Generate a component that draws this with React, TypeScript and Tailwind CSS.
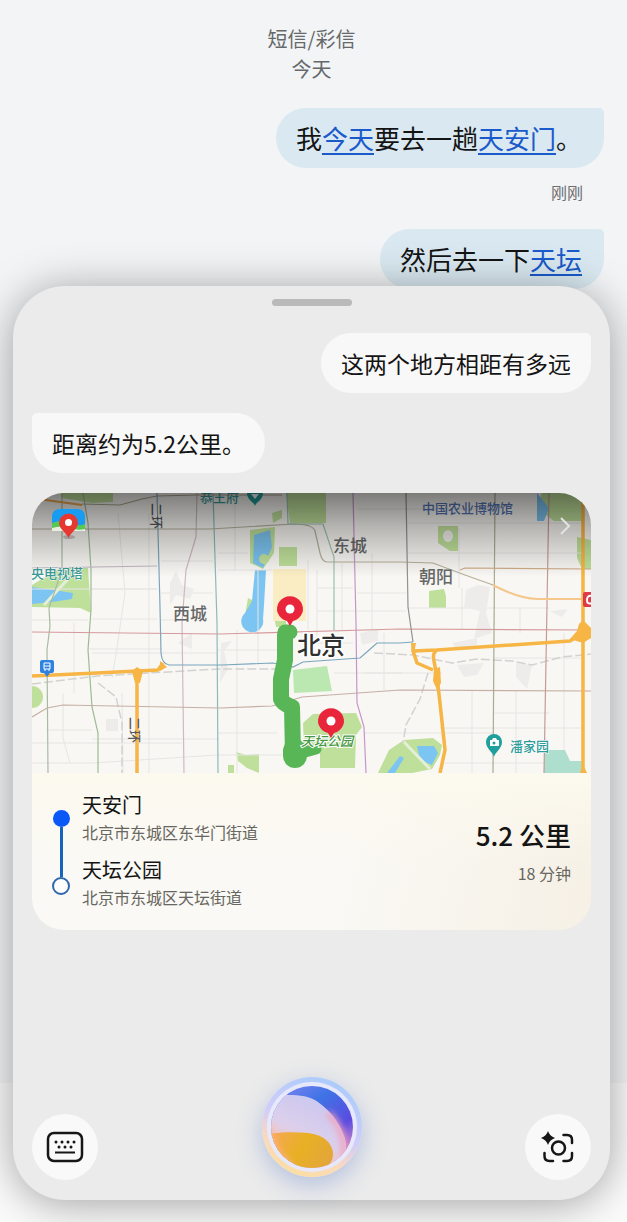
import type { ReactNode } from 'react';

const grayStreets = [
  'M0 96H125 M60 96H125 M0 127H56 M60 126H125 M129 68H181 M129 100H181 M129 127H150',
  'M56 156H130 M60 160H186 M0 250H150 M0 270H60 L186 262 M14 237H60 M60 246H186',
  'M86 20L93 100L85 155L80 185 M117 20V280 M90 200L91 280 M42 130V200 M31 200V245L38 270',
  'M186 60H216 M186 77H240 M186 157H245 M186 240H245 M186 262H250 M203 10V77 M205 137V280',
  'M226 77V172 M245 180V200 M276 67V137 M285 77V150 M310 70V137 M285 95H321 M285 118H374',
  'M285 150H321 M302 180H370 M325 100H374 M332 180H410 M332 240H461 M340 60V140 M352 140V197',
  'M325 16H461 M374 30H551 M376 60H461 M427 35V95 M430 95V137 M376 115H517 M488 115V140',
  'M463 60H551 M463 165H551 M408 235H551 M461 220H517 M413 270H512 M440 197V280 M484 197V280 M532 140V257',
];

const railways = [
  'M0 191L65 183L186 176L245 176',
  'M342 160L381 162L420 170L445 166L480 168L500 172L530 164L559 161',
  'M396 180L388 206L374 232L371 250',
  'M66 190L84 204L90 230V280',
];

const roads = [
  { d: 'M30 0V77L17 115L18 133L15 157L16 280', color: '#a8baa2' },
  { d: 'M51 0L56 30L59 77V117L56 157L60 214L66 240V280', color: '#9dbb95' },
  { d: 'M165 0L164 44L154 77L150 130L152 280', color: '#cdbac4' },
  { d: 'M181 0L185 130L186 280', color: '#8fb8bd' },
  { d: 'M0 36H178L261 31Q281 31 283 38L288 60Q290 69 295 69H368L401 70L433 82L461 92', color: '#b5b09a' },
  { d: 'M0 75L125 73', color: '#c0b6c4' },
  { d: 'M0 139L188 141L368 136L559 137', color: '#d69a9e' },
  { d: 'M0 224L15 215L31 212L188 215L240 213L270 204L368 197L559 198', color: '#c6afa6' },
  { d: 'M50 11L88 12L110 6L125 3L165 2H250', color: '#a9a48e' },
  { d: 'M255 0L256 31H291L302 64V137', color: '#9ac2ae' },
  { d: 'M321 0L324 130L325 210L332 234L334 280', color: '#c795cb' },
  { d: 'M374 0L376 114L381 149', color: '#8f9391' },
  { d: 'M463 0L461 280', color: '#a9ab92' },
  { d: 'M517 0L512 280', color: '#c69b96' },
  { d: 'M428 77L433 75L559 76', color: '#cfab87' },
  { d: 'M125 0L128 114L129 160Q130 171 137 172H190L241 170L261 174L271 169L328 165L336 158L345 150H368L381 149', color: '#7ba6bf' },
];

const highways = [
  'M0 183L65 180L105 178L126 177L131 170',
  'M105 178V280',
  'M381 150V158L405 157L538 148L551 140',
  'M381 158L385 170L401 177',
  'M405 157Q400 160 402 168L405 184L408 210L413 257L408 280',
  'M551 0V280',
];

function MapPin({ x, y }: { x: number; y: number }) {
  return (
    <g transform={`translate(${x} ${y})`}>
      <path d="M0 17L-3 12A13 12.500 0 1 1 3 12Z" fill="#e9253c" />
      <circle r="4.500" fill="#fff" />
    </g>
  );
}

function RouteMap() {
  return (
    <svg viewBox="0 0 559 280" className="block h-auto w-full" role="img" aria-label="天安门 - 天坛公园">
      <defs>
        <linearGradient id="mapShade" x1="0" y1="0" x2="0" y2="1">
          <stop offset="0" stopColor="#000" stopOpacity="0.5" />
          <stop offset="0.4" stopColor="#000" stopOpacity="0.27" />
          <stop offset="1" stopColor="#000" stopOpacity="0" />
        </linearGradient>
        <clipPath id="appIcon">
          <path d="M20 24Q20 16 28 16H45Q53 16 53 24V38H20Z" />
        </clipPath>
      </defs>
      <rect width="559" height="280" fill="#f8f7f3" />

      {/* parks */}
      <g fill="#bfe09a">
        <path d="M28 0H81V9L60 10L30 5Z" />
        <path d="M0 92L28 75H56L59 120L48 115L0 114Z" />
        <circle cx="0" cy="204" r="11" />
        <path d="M218 37L243 34L242 60L231 76L218 70Z M216 105L230 112L231 132L212 128Z" />
        <path d="M247 54H265V73H247Z M254 0H294V30H258Z M240 20L250 17V25L241 30Z M241 118H254V134H244Z" />
        <path d="M271 230L281 221L324 220L330 234L324 242L323 275H288V258L272 252Z" />
        <path d="M204 259L214 262L227 261V280L215 275L206 268Z M196 272H202V280H196Z" />
        <path d="M406 33H426V58H418L406 50Z M397 98L412 96L414 103V115H397Z" />
        <path d="M510 0H551V28H522L505 15Z M545 44L559 47V76H550L545 65Z" />
        <path d="M346 280L357 257L372 247L401 245L410 252L408 262L400 276L380 280Z" />
      </g>
      <path d="M261 177L295 173L300 198L262 200Z" fill="#bbe7b0" />
      <path d="M512 257H533L538 268H551V280H512Z" fill="#aedfce" />
      <path d="M241 76H274V128H241Z" fill="#fbedc3" />
      <ellipse cx="416" cy="43" rx="5" ry="6" fill="#f2f1ee" />

      {/* lakes */}
      <g fill="#7cc4f1">
        <path d="M0 94L22 97L41 100L40 106L20 109L0 111Z" />
        <path d="M222 42L238 37L240 54L231 75L221 70Z" />
        <path d="M223 77H234L232 112L231 126A11 11 0 1 1 213 120L220 108Z" />
        <path d="M385 253L402 253L406 260L400 272L388 267Z M355 280L368 263L372 265L363 280Z" />
        <path d="M505 0L517 15L512 28H505Z" />
      </g>
      <circle cx="232" cy="66" r="5" fill="#bfe09a" />
      <path d="M12 112L36 86 M371 248L398 276" stroke="#e5efd5" strokeWidth="3" />

      {/* street grid */}
      <g fill="none" stroke="#e6e5e4" strokeWidth="1">
        {grayStreets.map((d) => (
          <path key={d} d={d} />
        ))}
      </g>
      <g fill="#edecea">
        <path d="M138 90L144 78L150 92L162 96L158 106L144 102L138 112Z M146 150L160 140V156Z M74 226H86V238H74Z" />
        <path d="M434 97L446 92L458 94L454 120L460 140L442 146L448 118L432 114Z M420 150L445 145V152L425 156Z" />
        <path d="M425 172L452 170L445 182L432 184Z M484 170L500 172L495 196L484 184Z M518 118L536 116L530 124Z" />
        <path d="M189 150L200 148L192 158L196 176L188 190Z M328 140L346 136V148L330 152Z" />
      </g>
      <g fill="none" stroke="#d2d2d1" strokeWidth="1.500" strokeDasharray="9 3">
        {railways.map((d) => (
          <path key={d} d={d} />
        ))}
      </g>
      <g fill="none" strokeWidth="1.200">
        {roads.map((road) => (
          <path key={road.d} d={road.d} stroke={road.color} />
        ))}
      </g>
      <path d="M0 5L50 12" stroke="#f0a64b" strokeWidth="2" />
      <path d="M461 92Q485 105 505 106H549" fill="none" stroke="#f5c78c" strokeWidth="2" />
      <g fill="none" stroke="#f6b544" strokeWidth="3.500" strokeLinejoin="round">
        {highways.map((d) => (
          <path key={d} d={d} />
        ))}
      </g>
      <path
        d="M100 178L105 174L111 178L108 190H103Z M128 168L135 174L128 178Z M538 146L545 138L547 131L551 127L555 131L559 135V145L551 150Z M402 176L408 174L409 190L405 197L401 188Z M379 150H384L382 160Z M548 280L551 271L555 280Z"
        fill="#f6b544"
      />

      {/* route */}
      <g fill="none" stroke="#58b656" strokeLinecap="round" strokeLinejoin="round">
        <path d="M253 142L253 167L249 186V206Q251 211 260 214L261 262" strokeWidth="16" />
        <path d="M253 139H258" strokeWidth="15" />
        <path d="M263 258V263" strokeWidth="24" />
        <path d="M266 261L284 256" strokeWidth="11" />
      </g>

      <g fontFamily="'Noto Sans CJK SC', sans-serif" fontWeight="500">
        <g fill="#666867" fontSize="17">
          <text x="141" y="127">西城</text>
          <text x="301" y="59">东城</text>
          <text x="387" y="90">朝阳</text>
        </g>
        <text x="265" y="161" fontSize="24" fill="#303030" stroke="#fff" strokeWidth="3" paintOrder="stroke">
          北京
        </text>
        <g fontSize="13" stroke="#fff" strokeWidth="1" paintOrder="stroke">
          <text x="-1" y="85" fill="#3b9b98">央电视塔</text>
          <text x="478" y="258" fill="#2d9c9b">潘家园</text>
          <text x="269" y="253" fill="#479844" strokeWidth="2" fontStyle="italic">天坛公园</text>
        </g>
        <text x="168" y="9" fontSize="13" fill="#3b9b98">恭王府</text>
        <text x="390" y="20" fontSize="13" fill="#5474b3">中国农业博物馆</text>
        <g fontSize="13" fill="#5b5b5b">
          <text transform="translate(120 10) rotate(90)">二环</text>
          <text transform="translate(98 224) rotate(90)">二环</text>
        </g>
      </g>

      <MapPin x={258} y={116} />
      <MapPin x={299} y={228} />

      {/* small place markers */}
      <path d="M10 167H20Q22 167 22 169V178Q22 180 20 180H18L15 184L12 180H10Q8 180 8 178V169Q8 167 10 167Z" fill="#2f82e0" />
      <path d="M12 170H18V176H12Z M12 177H14 M16 177H18 M12 173H18" fill="none" stroke="#fff" strokeWidth="1" />
      <path d="M462 264C461 259 454 256 454 249A8 8 0 0 1 470 249C470 256 463 259 462 264Z" fill="#20a09d" />
      <path d="M458 247H460L461 245H464L465 247H467V253H458Z" fill="#fff" />
      <circle cx="462" cy="250" r="1.500" fill="#20a09d" />
      <path d="M223 13C222 9 215 7 215 0H231C231 7 224 9 223 13Z" fill="#219d98" />
      <path d="M219 1H227L223 6Z" fill="#fff" />
      <rect x="551" y="99" width="12" height="15" rx="2" fill="#dc3c49" />
      <path d="M560 103Q555 102 555 107T560 110" fill="none" stroke="#fff" strokeWidth="2" />

      <rect width="559" height="84" fill="url(#mapShade)" />

      <g clipPath="url(#appIcon)">
        <rect x="20" y="16" width="33" height="22" fill="#189cf1" />
        <path d="M20 30Q30 26 38 30T53 31V38H20Z" fill="#56c853" />
        <path d="M20 35Q30 32 38 35T53 36V38H20Z" fill="#e7efe1" />
      </g>
      <ellipse cx="37" cy="44" rx="6" ry="2" fill="#777" opacity=".5" />
      <path d="M36.500 45C34 39 27 36 27 30A9.500 9.500 0 0 1 46 30C46 36 39 39 36.500 45Z" fill="#e73731" />
      <circle cx="36.500" cy="29.500" r="3.500" fill="#fff" />
      <path d="M529 25L537 33L529 41" fill="none" stroke="#e2e2e0" strokeWidth="2" />
    </svg>
  );
}

function KeyboardIcon() {
  return (
    <svg width="38" height="32" viewBox="0 0 38 32" fill="none" aria-hidden="true">
      <rect x="2" y="2" width="34" height="28" rx="6" stroke="#161616" strokeWidth="2.500" />
      <path d="M10 11h.01M16 11h.01M22 11h.01M28 11h.01M13 16h.01M19 16h.01M25 16h.01" stroke="#161616" strokeWidth="3" strokeLinecap="round" />
      <path d="M9 21.500H29" stroke="#161616" strokeWidth="2" />
    </svg>
  );
}

function LensIcon() {
  return (
    <svg width="34" height="34" viewBox="0 0 34 34" fill="none" aria-hidden="true">
      <g stroke="#161616" strokeWidth="2.500" strokeLinecap="round">
        <path d="M22.500 5H26Q31 5 31 10V13" />
        <path d="M31 23V26Q31 31 26 31H22.500" />
        <path d="M12 31H8.500Q3.500 31 3.500 26V23" />
        <circle cx="17.500" cy="18" r="6.500" />
      </g>
      <path d="M7 1Q8.500 6 14 8Q8.500 10 7 15Q5.500 10 0 8Q5.500 6 7 1Z" fill="#161616" />
    </svg>
  );
}

function AssistantOrb() {
  return (
    <svg width="100" height="100" viewBox="0 0 100 100" aria-hidden="true">
      <defs>
        <linearGradient id="ring" x1=".7" y1="0" x2=".3" y2="1">
          <stop offset="0" stopColor="#a9ccfb" />
          <stop offset=".5" stopColor="#d1cdfa" />
          <stop offset=".75" stopColor="#fbd9bf" />
          <stop offset="1" stopColor="#fadf9f" />
        </linearGradient>
        <linearGradient id="blue" x1=".2" y1="0" x2=".8" y2=".8">
          <stop offset="0" stopColor="#8a86f3" />
          <stop offset=".4" stopColor="#3f73e5" />
          <stop offset=".75" stopColor="#5b4be0" />
          <stop offset="1" stopColor="#d58bc9" />
        </linearGradient>
        <linearGradient id="lilac" x1=".7" y1="0" x2=".2" y2="1">
          <stop offset="0" stopColor="#c9c7f1" />
          <stop offset=".45" stopColor="#dccfeb" />
          <stop offset=".75" stopColor="#fbc3ae" />
        </linearGradient>
        <linearGradient id="gold" x1="0" y1=".2" x2="1" y2=".6">
          <stop offset="0" stopColor="#f6a855" />
          <stop offset=".5" stopColor="#e8b024" />
          <stop offset="1" stopColor="#e3a63a" />
        </linearGradient>
        <clipPath id="orbClip">
          <circle cx="50" cy="50" r="41" />
        </clipPath>
        <filter id="glow" x="-50%" y="-50%" width="200%" height="200%">
          <feGaussianBlur stdDeviation="3" />
        </filter>
      </defs>
      <circle cx="50" cy="50" r="50" fill="url(#ring)" />
      <circle cx="50" cy="50" r="45" fill="#e7e9fa" />
      <g clipPath="url(#orbClip)">
        <rect width="100" height="100" fill="url(#blue)" />
        <path d="M0 18H26C38 18 48 19 56 25C71 36 81 50 84 66L84 100H0Z" fill="url(#lilac)" />
        <path d="M66 36C78 48 84 60 82 84" fill="none" stroke="#f3a3bd" strokeWidth="6" filter="url(#glow)" />
        <path d="M6 57C20 55 34 55 46 56C62 58 70 66 71 76C71 82 69 86 66 89L50 95H6Z" fill="url(#gold)" />
        <path d="M6 50Q10 76 30 90" fill="none" stroke="#ffb488" strokeWidth="6" filter="url(#glow)" />
      </g>
    </svg>
  );
}

function Entity({ children }: { children: ReactNode }) {
  return (
    <a href="#" className="text-[#1a5acb] underline decoration-2 underline-offset-4">
      {children}
    </a>
  );
}

const stops = [
  { name: '天安门', address: '北京市东城区东华门街道' },
  { name: '天坛公园', address: '北京市东城区天坛街道' },
];

export default function App() {
  return (
    <div className="flex min-h-screen flex-col overflow-hidden bg-[linear-gradient(to_top,#fbfbfb_139px,#f2f4f6_139px)] pr-[17px] pb-[22px] pl-[13px] font-['Noto_Sans_CJK_SC',sans-serif] text-[#141414]">
      <section className="flex flex-col items-end pt-6 pr-[6px]">
        <header className="-mr-[6px] self-stretch text-center text-xl leading-[30px] text-[#66686a]">
          <h1>短信/彩信</h1>
          <p>今天</p>
        </header>
        <p className="mt-6 rounded-[30px] rounded-tr-[5px] bg-[#dae9f1] pr-[22px] pl-5 text-[26px] leading-[60px]">
          我<Entity>今天</Entity>要去一趟<Entity>天安门</Entity>。
        </p>
        <time className="mt-3 mr-[21px] text-base text-[#6b6d6f]">刚刚</time>
        <p className="mt-[25px] rounded-[30px] rounded-tr-[5px] bg-[#dae9f1] pr-[22px] pl-5 text-[26px] leading-[60px]">
          然后去一下<Entity>天坛</Entity>
        </p>
      </section>

      <main className="relative -mt-[3px] flex flex-1 flex-col rounded-[52px] bg-[#ebebeb] px-[19px] pt-[13px] pb-5 shadow-[0_4px_44px_rgba(0,0,0,0.36)]">
        <div className="mx-auto h-[7px] w-20 rounded-full bg-[#bababa]" />

        <p className="mt-[27px] self-end rounded-[30px] rounded-tr-[5px] bg-[#f8f8f8] px-5 text-[23px] leading-[60px]">
          这两个地方相距有多远
        </p>
        <p className="mt-5 self-start rounded-[30px] rounded-tl-[5px] bg-[#f8f8f8] px-5 text-[23px] leading-[60px]">
          距离约为5.2公里。
        </p>

        <article className="mt-5 mb-10 overflow-hidden rounded-[32px] bg-[linear-gradient(105deg,#faf9f5_60%,#f6f0e5)]">
          <RouteMap />
          <div className="flex items-center bg-[linear-gradient(to_bottom,#fcf9ee,#faf9f500_60%)] pt-[18px] pr-5 pb-5 pl-5">
            <div className="mr-3 flex flex-col items-center pt-1">
              <span className="size-[17px] rounded-full bg-[#0a59f7]" />
              <span className="h-[50px] w-[3px] bg-[#1b62ba]" />
              <span className="size-[18px] rounded-full border-2 border-[#2f67ae] bg-white" />
            </div>
            <ul className="flex-1 space-y-[11px]">
              {stops.map((stop) => (
                <li key={stop.name}>
                  <h2 className="text-xl leading-7">{stop.name}</h2>
                  <p className="text-base leading-[26px] text-[#68675f]">{stop.address}</p>
                </li>
              ))}
            </ul>
            <div className="pt-1 text-right">
              <p className="text-[26px] leading-10 font-medium">5.2 公里</p>
              <p className="text-base leading-9 text-[#68675f]">18 分钟</p>
            </div>
          </div>
        </article>

        <footer className="mt-auto flex items-end justify-between">
          <button type="button" aria-label="键盘" className="flex size-[66px] items-center justify-center rounded-full bg-[#f9f9f9]">
            <KeyboardIcon />
          </button>
          <button type="button" aria-label="小艺" className="mb-[3px] rounded-full shadow-[0_8px_24px_rgba(110,140,205,0.45)]">
            <AssistantOrb />
          </button>
          <button type="button" aria-label="识屏" className="flex size-[66px] items-center justify-center rounded-full bg-[#f9f9f9]">
            <LensIcon />
          </button>
        </footer>
      </main>
    </div>
  );
}
